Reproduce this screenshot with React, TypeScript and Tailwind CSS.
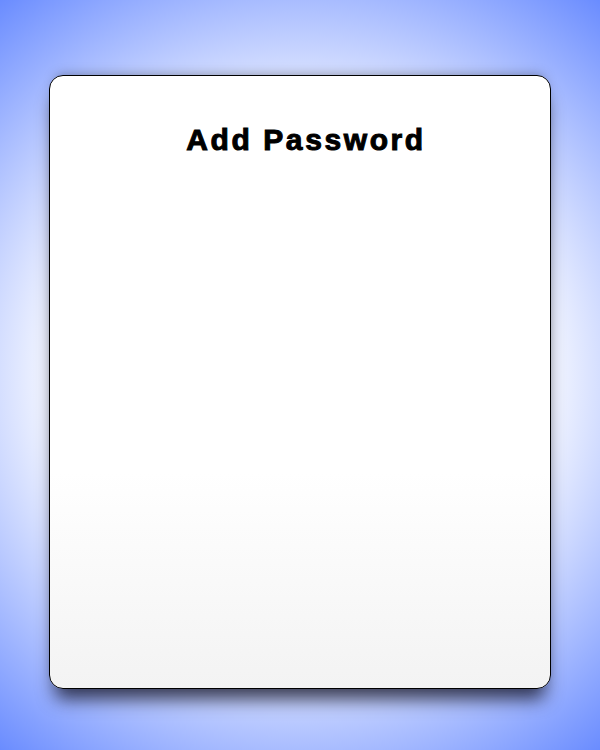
export default function App() {
  return (
    <main className="w-full h-[750px] overflow-hidden bg-[radial-gradient(circle_at_center,#ffffff_48%,#6a8cff_100%)] flex justify-center pt-[75px]">
      <section className="w-[502px] h-[614px] rounded-[14px] border-[1.5px] border-black bg-[linear-gradient(to_bottom,#ffffff_0%,#ffffff_65%,#f3f3f3_100%)] shadow-[0_16px_18px_-6px_rgba(20,20,40,0.8),0_-6px_12px_-6px_rgba(0,0,0,0.35)] flex flex-col items-center pt-[46px]">
        <h1 className="ml-[12px] font-['Liberation_Sans',Arial,sans-serif] font-bold text-[30px] leading-[36px] tracking-[2.6px] [-webkit-text-stroke:1px_black] text-black">
          Add Password
        </h1>
      </section>
    </main>
  );
}
